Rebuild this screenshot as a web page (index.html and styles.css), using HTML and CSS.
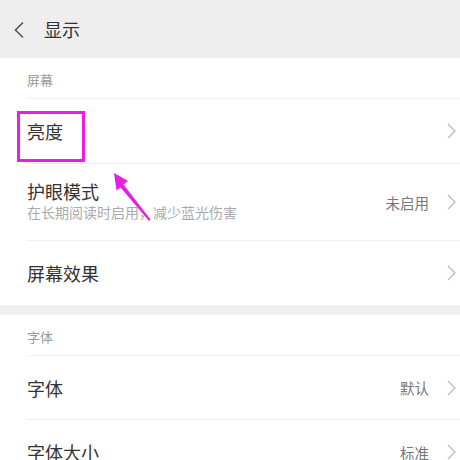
FILE: index.html
```html
<!DOCTYPE html>
<html lang="zh">
<head>
<meta charset="utf-8">
<link rel="stylesheet" href="styles.css">
</head>
<body>
<div class="page">
  <header class="topbar">
    <svg class="back" width="12" height="18" viewBox="0 0 12 18"><path d="M10 1.5 L2.5 9 L10 16.5" fill="none" stroke="#555" stroke-width="1.6"/></svg>
    <span class="title">显示</span>
  </header>

  <section class="group">
    <div class="group-head">屏幕</div>
    <div class="row r-bright">
      <div class="main"><div class="label">亮度</div></div>
      <svg class="chev" width="9" height="16" viewBox="0 0 9 16"><path d="M1 1 L8 8 L1 15" fill="none" stroke="#bbb" stroke-width="1.3"/></svg>
    </div>
    <div class="row r-eye">
      <div class="main">
        <div class="label">护眼模式</div>
        <div class="sub">在长期阅读时启用，减少蓝光伤害</div>
      </div>
      <span class="value">未启用</span>
      <svg class="chev" width="9" height="16" viewBox="0 0 9 16"><path d="M1 1 L8 8 L1 15" fill="none" stroke="#bbb" stroke-width="1.3"/></svg>
    </div>
    <div class="row r-last">
      <div class="main"><div class="label">屏幕效果</div></div>
      <svg class="chev" width="9" height="16" viewBox="0 0 9 16"><path d="M1 1 L8 8 L1 15" fill="none" stroke="#bbb" stroke-width="1.3"/></svg>
    </div>
  </section>

  <section class="group">
    <div class="group-head">字体</div>
    <div class="row">
      <div class="main"><div class="label">字体</div></div>
      <span class="value">默认</span>
      <svg class="chev" width="9" height="16" viewBox="0 0 9 16"><path d="M1 1 L8 8 L1 15" fill="none" stroke="#bbb" stroke-width="1.3"/></svg>
    </div>
    <div class="row r-last">
      <div class="main"><div class="label">字体大小</div></div>
      <span class="value">标准</span>
      <svg class="chev" width="9" height="16" viewBox="0 0 9 16"><path d="M1 1 L8 8 L1 15" fill="none" stroke="#bbb" stroke-width="1.3"/></svg>
    </div>
  </section>

  <div class="highlight"></div>
  <svg class="arrow" width="60" height="70" viewBox="0 0 60 70">
    <path d="M14 13 L28 21 L23.5 24.5 L50.5 59.5 L49 61 L20.5 27.5 L16.5 30.5 Z" fill="#e61ee6"/>
  </svg>
</div>
</body>
</html>
```

FILE: styles.css
```css
html, body {
  margin: 0;
  padding: 0;
  background: #f0f0f0;
}
body {
  font-family: "Noto Sans CJK SC", "Noto Sans", sans-serif;
  color: #333;
}
.page {
  position: relative;
  width: 460px;
  height: 460px;
  overflow: hidden;
}
.topbar {
  height: 58px;
  background: #eeeeee;
  display: flex;
  align-items: center;
  padding-left: 13px;
  box-sizing: border-box;
}
.back {
  display: block;
  margin-top: 1px;
}
.title {
  margin-left: 19px;
  font-size: 18px;
  color: #333;
  line-height: 1;
}
.group {
  background: #fff;
  padding-left: 27px;
  margin-bottom: 10px;
}
.group-head {
  height: 41px;
  box-sizing: border-box;
  border-bottom: 1px solid #f0f0f0;
  font-size: 13px;
  color: #999;
  display: flex;
  align-items: center;
  padding-top: 2px;
}
.row {
  height: 64px;
  box-sizing: border-box;
  border-bottom: 1px solid #efefef;
  display: flex;
  align-items: center;
  padding-right: 4px;
}
.r-bright { height: 65px; }
.r-eye { height: 77px; }
.r-last { border-bottom: none; }
.main {
  flex: 1;
}
.label {
  font-size: 18px;
  line-height: 22px;
  color: #333;
}
.sub {
  font-size: 14px;
  line-height: 18px;
  color: #aaa;
  margin-top: 1px;
}
.r-eye .main {
  margin-top: -3px;
}
.value {
  font-size: 14.5px;
  color: #777;
  margin-right: 18px;
}
.chev {
  display: block;
}
.highlight {
  position: absolute;
  left: 17px;
  top: 111px;
  width: 68px;
  height: 51px;
  box-sizing: border-box;
  border: 3px solid #e61ee6;
}
.arrow {
  position: absolute;
  left: 100px;
  top: 160px;
}
```
